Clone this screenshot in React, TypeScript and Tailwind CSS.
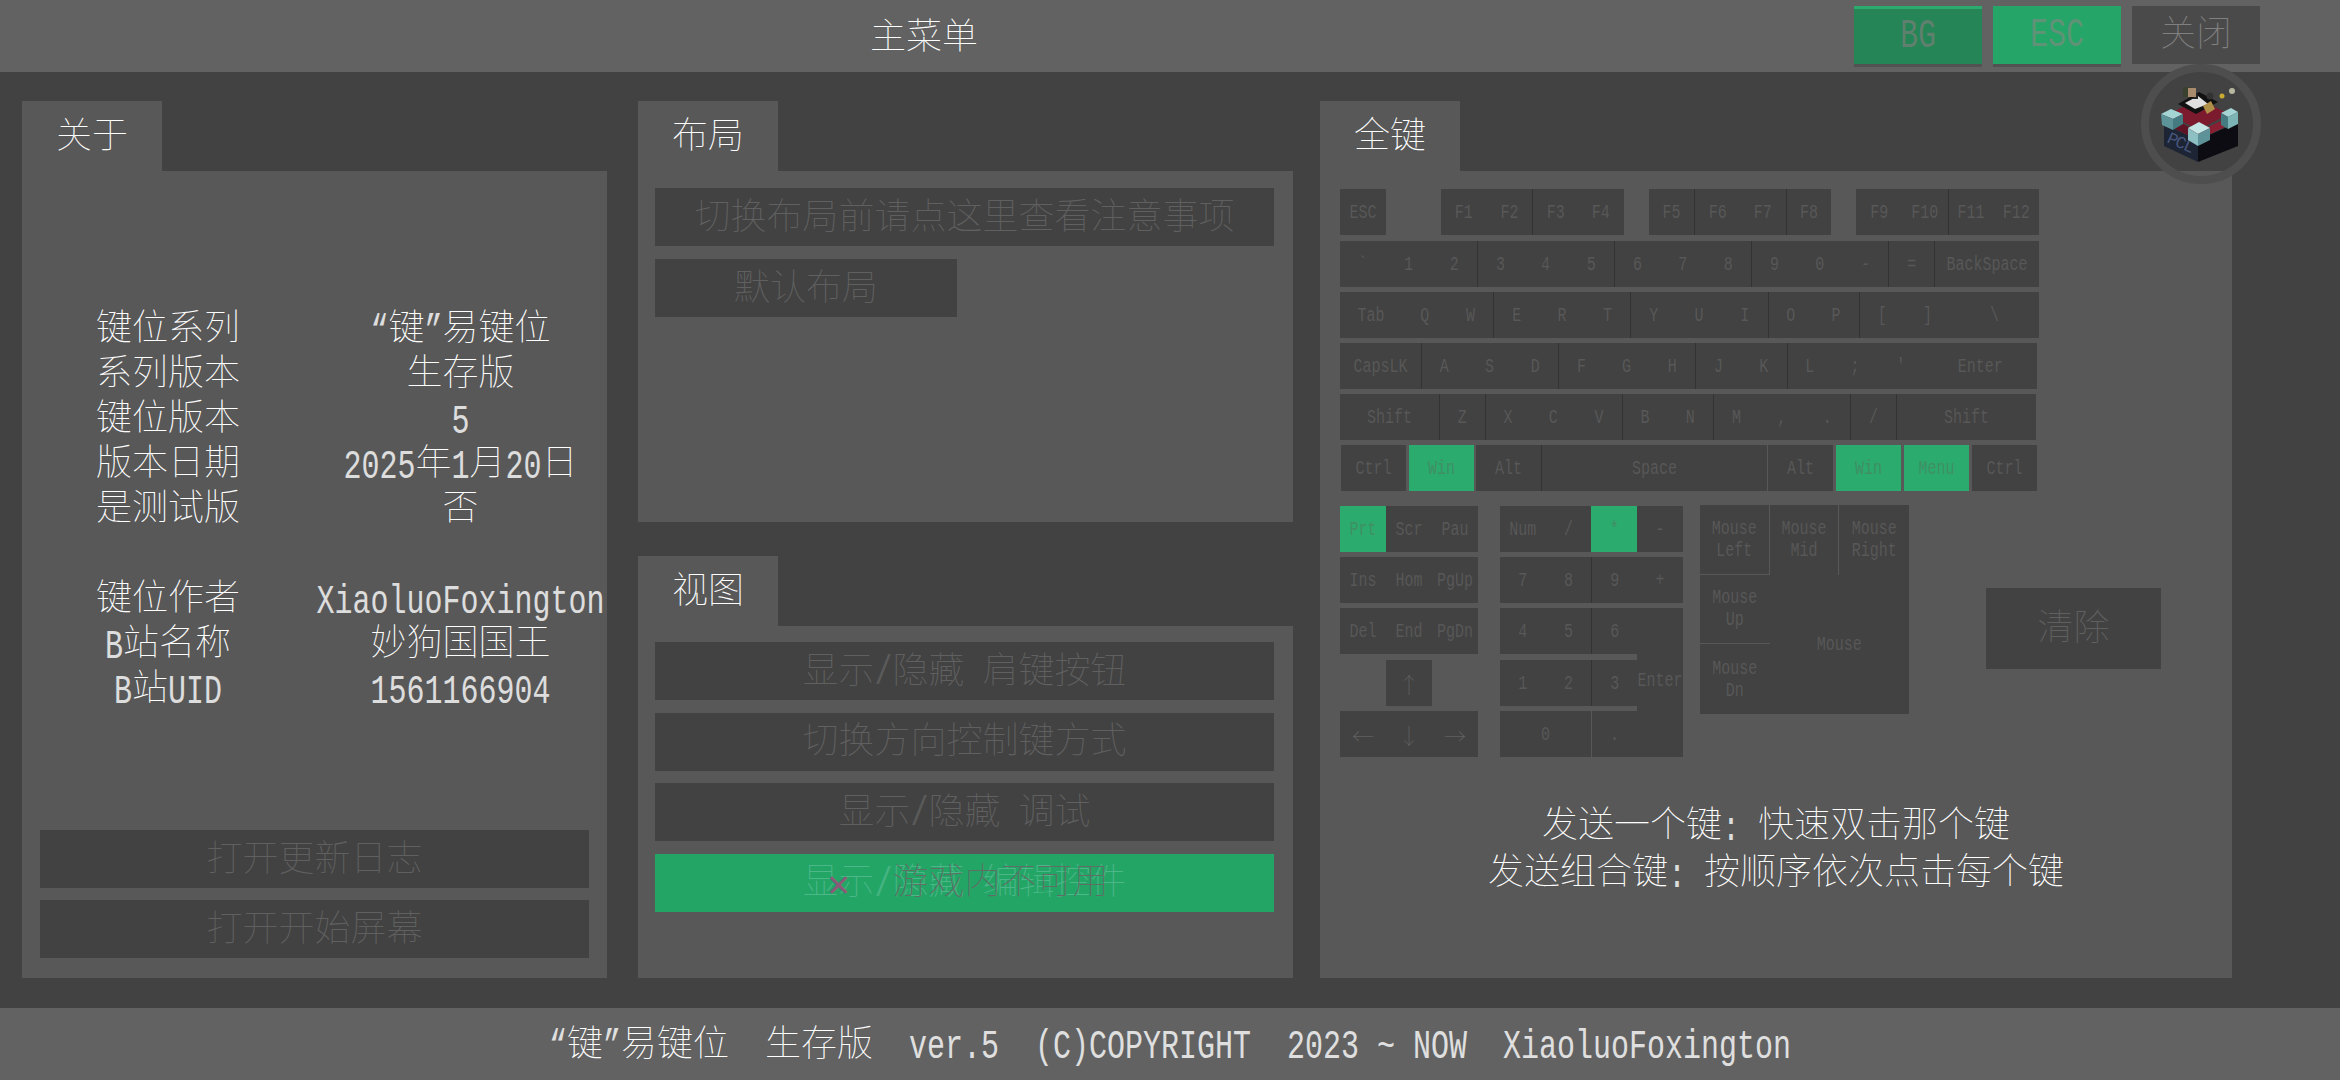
import type { ReactNode } from "react";

const font = "font-['Liberation_Mono','Noto_Sans_CJK_SC',monospace]";

// latin glyphs are half of the CJK width in the reference, so they get a smaller size stretched tall
const T = ({ children, small }: { children: string; small?: boolean }) => {
  const parts = children.split(/([\x00-\x7f“”]+)/).filter(Boolean);
  return (
    <>
      {parts.map((p, i) =>
        /^[\x00-\x7f“”]+$/.test(p) ? (
          <span key={i} className={small ? "inline-block scale-y-[1.35] text-[15px] opacity-85" : "inline-block scale-y-[1.35] text-[30px] opacity-80"}>
            {p}
          </span>
        ) : (
          <span key={i}>{p}</span>
        )
      )}
    </>
  );
};

type K = { l: string; w: string; d?: boolean; on?: boolean };

const Key = ({ l, w, d, on }: K) => (
  <div
    className={`${w} h-[46px] pt-[3px] flex items-center justify-center text-[18px] leading-[22px] whitespace-pre ${on ? "bg-[#2bac6e] text-[#458a64]" : "bg-[#424242] text-[#5c5c5c]"} ${d ? "border-l border-[#333333]" : ""}`}
  >
    <T small>{l}</T>
  </div>
);

const k = (l: string, d?: boolean): K => ({ l, w: "w-[45.7px]", d });

const row2: K[] = [k("`"), k("1"), k("2"), k("3", true), k("4"), k("5"), k("6", true), k("7"), k("8"), k("9", true), k("0"), k("-"), k("=", true), { l: "BackSpace", w: "flex-1", d: true }];
const row3: K[] = [{ l: "Tab", w: "w-[62px]" }, k("Q"), k("W"), k("E", true), k("R"), k("T"), k("Y", true), k("U"), k("I"), k("O", true), k("P"), k("[", true), k("]"), { l: "\\", w: "flex-1" }];
const row4: K[] = [{ l: "CapsLK", w: "w-[81px]" }, k("A", true), k("S"), k("D"), k("F", true), k("G"), k("H"), k("J", true), k("K"), k("L", true), k(";"), k("'"), { l: "Enter", w: "flex-1" }];
const row5: K[] = [{ l: "Shift", w: "w-[99px]" }, k("Z", true), k("X", true), k("C"), k("V"), k("B", true), k("N"), k("M", true), k(","), k("."), k("/", true), { l: "Shift", w: "flex-1", d: true }];

const Panel = ({ title, className, children }: { title: string; className: string; children: ReactNode }) => (
  <section className={`flex flex-col ${className}`}>
    <div className="w-[140px] h-[70px] shrink-0 pt-[6px] bg-[#585858] flex items-center justify-center text-[36px] text-white font-thin">{title}</div>
    <div className="flex-1 bg-[#585858] flex flex-col">{children}</div>
  </section>
);

const Btn = ({ children, className = "" }: { children: string; className?: string }) => (
  <div className={`h-[58px] pt-[5px] flex items-center justify-center text-[36px] whitespace-pre font-thin text-[#606060] bg-[#424242] ${className}`}>
    <T>{children}</T>
  </div>
);

const aboutRows: [string, string][] = [
  ["键位系列", "“键”易键位"],
  ["系列版本", "生存版"],
  ["键位版本", "5"],
  ["版本日期", "2025年1月20日"],
  ["是测试版", "否"],
  ["", ""],
  ["键位作者", "XiaoluoFoxington"],
  ["B站名称", "妙狗国国王"],
  ["B站UID", "1561166904"],
];

const Logo = () => (
  <svg viewBox="0 0 120 120" className="w-[120px] h-[120px]">
    <circle cx="60" cy="60" r="56" fill="none" stroke="#4e4e4e" strokeWidth="8" />
    <polygon points="23,60 57,76 57,98 23,82" fill="#1d2434" />
    <polygon points="57,76 97,58 97,82 57,98" fill="#0c0c12" />
    <text x="25" y="78" fontSize="17" fill="#46557a" fontFamily="Liberation Mono" transform="rotate(24 25 78)" textLength="28">PCL</text>
    <polygon points="28,50 58,35 88,50 57,66" fill="#7c1a2e" />
    <polygon points="28,52 57,68 57,76 28,62" fill="#5f1325" />
    <polygon points="57,68 90,52 90,60 57,76" fill="#8a1e33" />
    <polygon points="20,50 30,45 42,50 32,55" fill="#a4d4d4" />
    <polygon points="20,50 32,55 32,66 21,61" fill="#5c949a" />
    <polygon points="32,55 42,50 42,60 32,66" fill="#447a80" />
    <polygon points="80,49 90,44 97,48 87,53" fill="#a4d4d4" />
    <polygon points="87,53 97,48 97,60 87,65" fill="#7cb4b6" />
    <polygon points="80,49 87,53 87,65 80,61" fill="#447a80" />
    <polygon points="47,64 58,58 69,64 57,70" fill="#c4e6e4" />
    <polygon points="47,64 57,70 57,82 47,76" fill="#8cc0c2" />
    <polygon points="57,70 69,64 69,76 57,82" fill="#5c9298" />
    <polygon points="37,40 58,28 77,38 55,50" fill="#111111" />
    <polygon points="44,39 57,32 67,40 54,45" fill="#e0e0e0" />
    <rect x="52" y="30" width="5" height="5" fill="#222222" />
    <polygon points="62,42 70,37 74,45 66,50" fill="#b08f48" />
    <rect x="42" y="23" width="8" height="10" fill="#3a4030" />
    <rect x="47" y="24" width="8" height="9" fill="#a88a6c" />
    <circle cx="69" cy="32" r="3.5" fill="#333333" />
    <circle cx="81" cy="32" r="2.5" fill="#c8aa30" />
    <circle cx="91" cy="27" r="3" fill="#b8b8a0" />
  </svg>
);

const Mouse = ({ children, className = "" }: { children: ReactNode; className?: string }) => (
  <div className={`pt-[3px] flex flex-col items-center justify-center text-[18px] leading-[22px] text-[#5c5c5c] ${className}`}>{children}</div>
);

// arrows are full width glyphs in the reference
const Arrow = ({ c }: { c: string }) => (
  <div className="w-[46px] h-[46px] bg-[#424242] flex items-center justify-center text-[22px] font-thin text-[#606060] font-['Noto_Sans_CJK_SC']">{c}</div>
);

export default function App() {
  return (
    <div className={`w-[2340px] h-[1080px] flex flex-col bg-[#424242] overflow-hidden ${font}`}>
      <header className="h-[72px] shrink-0 bg-[#626262] flex items-start">
        <div className="w-[1848px] h-[68px] pt-[12px] flex items-center justify-center text-[36px] text-white font-thin">主菜单</div>
        <div className="flex gap-[11px] pt-[6px] pl-[6px]">
          <div className="w-[128px] h-[61px] bg-[#258556] border-t-[3px] border-b-[3px] border-t-[#2bac6e] border-b-[#525252] flex items-center justify-center text-[36px] text-[#6e7f74]"><T>BG</T></div>
          <div className="w-[128px] h-[61px] bg-[#25a668] border-b-[3px] border-b-[#525252] flex items-center justify-center text-[36px] text-[#6e8f7c]"><T>ESC</T></div>
          <div className="w-[128px] h-[58px] pt-[3px] bg-[#4a4a4a] flex items-center justify-center text-[36px] font-thin text-[#808080]">关闭</div>
        </div>
      </header>

      <main className="flex-1 flex pl-[22px] pt-[29px] pb-[30px]">
        <Panel title="关于" className="w-[585px]">
          <div className="flex-1 flex flex-col justify-center pt-[20px] text-[36px] leading-[45px] text-white font-thin whitespace-pre">
            {aboutRows.map(([a, b], i) => (
              <div key={i} className="flex h-[45px]">
                <div className="w-[292px] text-center"><T>{a}</T></div>
                <div className="flex-1 text-center"><T>{b}</T></div>
              </div>
            ))}
          </div>
          <div className="px-[18px] pb-[20px] flex flex-col gap-[12px]">
            <Btn>打开更新日志</Btn>
            <Btn>打开开始屏幕</Btn>
          </div>
        </Panel>

        <div className="w-[655px] ml-[31px] flex flex-col gap-[34px]">
          <Panel title="布局" className="h-[421px]">
            <div className="flex flex-col gap-[13px] pl-[17px] pr-[19px] pt-[17px]">
              <Btn>切换布局前请点这里查看注意事项</Btn>
              <Btn className="w-[302px]">默认布局</Btn>
            </div>
          </Panel>
          <Panel title="视图" className="flex-1">
            <div className="flex flex-col gap-[12.5px] pl-[17px] pr-[19px] pt-[16px]">
              <Btn>显示/隐藏 肩键按钮</Btn>
              <Btn>切换方向控制键方式</Btn>
              <Btn>显示/隐藏 调试</Btn>
              <div className="relative">
                <Btn className="!bg-[#23a565] !text-[#4cb788]">显示/隐藏 编辑控件</Btn>
                <div className="absolute inset-0 pt-[5px] flex items-center justify-center text-[36px] font-thin text-[#5f6f66] whitespace-pre">
                  <span className="w-[36px] text-center font-['DejaVu_Sans'] text-[30px] text-[#8a5a78]">✕</span>
                  <span className="w-[36px]" />
                  游戏内不可用
                </div>
              </div>
            </div>
          </Panel>
        </div>

        <div className="w-[912px] ml-[27px] relative">
          <Panel title="全键" className="h-full">
            <div className="pl-[20px] pt-[18px] w-[719px]">
              <div className="flex">
                <Key l="ESC" w="w-[46px]" />
                <div className="w-[55px]" />
                <Key {...k("F1")} /><Key {...k("F2")} /><Key {...k("F3", true)} /><Key {...k("F4")} />
                <div className="w-[25px]" />
                <Key {...k("F5")} /><Key {...k("F6", true)} /><Key {...k("F7")} /><Key {...k("F8", true)} />
                <div className="w-[25px]" />
                <Key {...k("F9")} /><Key {...k("F10")} /><Key {...k("F11", true)} /><Key {...k("F12")} />
              </div>
              <div className="flex mt-[6px]">{row2.map((x, i) => <Key key={i} {...x} />)}</div>
              <div className="flex mt-[5px]">{row3.map((x, i) => <Key key={i} {...x} />)}</div>
              <div className="flex mt-[5px] w-[697px]">{row4.map((x, i) => <Key key={i} {...x} />)}</div>
              <div className="flex mt-[5px] w-[696px]">{row5.map((x, i) => <Key key={i} {...x} />)}</div>
              <div className="flex mt-[5px] pl-[1px] w-[697px]">
                <Key l="Ctrl" w="w-[65px]" />
                <Key l="Win" w="w-[65px] ml-[3px]" on />
                <Key l="Alt" w="w-[65px] ml-[2px]" />
                <Key l="Space" w="w-[226px] border-l border-[#333333]" />
                <Key l="Alt" w="w-[65px] ml-[1px]" />
                <Key l="Win" w="w-[65px] ml-[3px]" on />
                <Key l="Menu" w="w-[65px] ml-[3px]" on />
                <Key l="Ctrl" w="w-[65px] ml-[3px]" />
              </div>
            </div>

            <div className="flex items-start pl-[20px] mt-[14px]">
              {/* nav cluster */}
              <div className="w-[138px] mt-[1px] flex flex-col">
                <div className="flex"><Key l="Prt" w="w-[46px]" on /><Key l="Scr" w="w-[46px]" /><Key l="Pau" w="w-[46px]" /></div>
                <div className="flex mt-[5px]"><Key l="Ins" w="w-[46px]" /><Key l="Hom" w="w-[46px]" /><Key l="PgUp" w="w-[46px]" /></div>
                <div className="flex mt-[5px]"><Key l="Del" w="w-[46px]" /><Key l="End" w="w-[46px]" /><Key l="PgDn" w="w-[46px]" /></div>
                <div className="flex mt-[6px] justify-center"><Arrow c="↑" /></div>
                <div className="flex mt-[5px]"><Arrow c="←" /><Arrow c="↓" /><Arrow c="→" /></div>
              </div>

              {/* numpad */}
              <div className="w-[183px] ml-[22px] mt-[1px] flex">
                <div className="w-[137px] flex flex-col">
                  <div className="flex"><Key {...k("Num")} /><Key {...k("/")} /><Key l="*" w="w-[45.7px]" on /></div>
                  <div className="flex mt-[5px]"><Key {...k("7")} /><Key {...k("8")} /><Key {...k("9", true)} /></div>
                  <div className="flex mt-[5px]"><Key {...k("4")} /><Key {...k("5")} /><Key {...k("6", true)} /></div>
                  <div className="flex mt-[6px]"><Key {...k("1")} /><Key {...k("2")} /><Key {...k("3", true)} /></div>
                  <div className="flex mt-[5px]"><Key l="0" w="w-[91px]" /><Key l="." w="flex-1 border-l !border-[#585858]" /></div>
                </div>
                <div className="flex-1 flex flex-col">
                  <Key l="-" w="w-full" />
                  <Key l="+" w="w-full mt-[5px]" />
                  <div className="flex-1 mt-[5px] bg-[#424242] flex items-center justify-center text-[18px] text-[#5c5c5c]"><T small>Enter</T></div>
                </div>
              </div>

              {/* mouse block */}
              <div className="w-[209px] h-[209px] ml-[17px] bg-[#424242] grid grid-cols-3 grid-rows-3">
                <Mouse className="border-r border-b border-[#585858]"><T small>Mouse</T><T small>Left</T></Mouse>
                <Mouse className="border-r border-[#585858]"><T small>Mouse</T><T small>Mid</T></Mouse>
                <Mouse><T small>Mouse</T><T small>Right</T></Mouse>
                <Mouse className="border-b border-[#585858]"><T small>Mouse</T><T small>Up</T></Mouse>
                <Mouse className="col-span-2 row-span-2"><T small>Mouse</T></Mouse>
                <Mouse><T small>Mouse</T><T small>Dn</T></Mouse>
              </div>

              <div className="w-[175px] h-[81px] pt-[5px] ml-[77px] mt-[83px] bg-[#424242] flex items-center justify-center text-[36px] font-thin text-[#606060]">清除</div>
            </div>

            <div className="w-[912px] mt-[48px] text-center text-[36px] leading-[45px] font-thin text-white whitespace-pre">
              <div><T>发送一个键: 快速双击那个键</T></div>
              <div><T>发送组合键: 按顺序依次点击每个键</T></div>
            </div>
          </Panel>
          <div className="absolute top-[-37px] left-[821px]"><Logo /></div>
        </div>
      </main>

      <footer className="h-[72px] shrink-0 pt-[6px] bg-[#626262] flex items-center justify-center text-[36px] font-thin text-white whitespace-pre">
        <T>“键”易键位  生存版  ver.5  (C)COPYRIGHT  2023 ~ NOW  XiaoluoFoxington</T>
      </footer>
    </div>
  );
}
